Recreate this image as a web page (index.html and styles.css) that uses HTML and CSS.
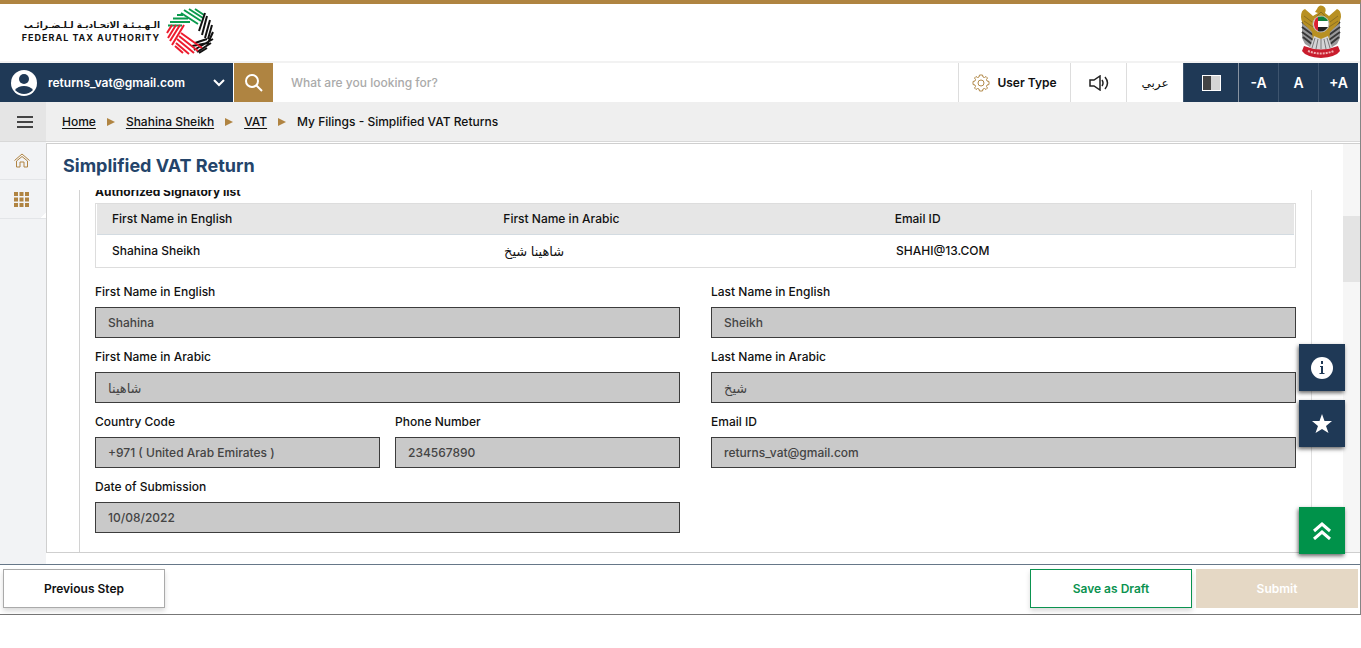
FILE: index.html
```
<!DOCTYPE html>
<html lang="en">
<head>
	<meta charset="UTF-8">
	<title>Simplified VAT Return</title>
	<link rel="stylesheet" href="styles.css">
</head>
<body>
<div class="app">
	<header class="header">
		<a class="logo" href="#">
			<span class="logo-text">
				<span class="logo-ar" lang="ar" dir="rtl">الـهـيـئـة الاتحـاديـة لـلـضـرائـب</span>
				<span class="logo-en">FEDERAL TAX AUTHORITY</span>
			</span>
			<svg class="logo-mark" viewBox="0 0 48 48" fill="none" stroke-width="2">
				<g stroke="#0B9A4D">
					<path d="M7 11.500H22M4 15H24M2 18.500H16M11 8H17"/>
					<path d="M15 6L32 17M18 3L35 14M23 2L37 11M29 2L38 8"/>
				</g>
				<g stroke="#111">
					<path d="M39 6L33 24M41 9L36 28M44 13L39 31M46 18L42 32"/>
					<path d="M47 25L42 36L26 39M47 32L28 43M45 36L31 45M41 41L33 46M41 32L29 36"/>
				</g>
				<g stroke="#ED1C2E">
					<path d="M15 26L36 41M13 29L32 44M11 32L28 46M10 36L23 47M9 39L17 46"/>
					<path d="M18 18L6 38M14 18L4 34M10 18L2 31M6 18L1 26"/>
				</g>
			</svg>
		</a>
		<svg class="emblem" viewBox="0 0 42 54">
			<path d="M2 13L13 20V45L5 40L2 34ZM40 13L29 20V45L37 40L40 34Z" fill="#99999B"/>
			<path d="M2 18L13 26M2 23L13 31M2 28L13 36M3 33L13 41M40 18L29 26M40 23L29 31M40 28L29 36M39 33L29 41" stroke="#383838" stroke-width="2"/>
			<path d="M17 5Q19 0 23 2Q27 4 25 9L29 12L37 5Q41 6 41 13Q40 19 35 23L30 28L29 37H13L12 28L7 23Q1 19 1 13Q1 6 5 5L13 12L18 9L15 8Z" fill="#B89022"/>
			<path d="M4 12L12 18M4 17L13 23M38 12L30 18M38 17L29 23M17 12L21 8L25 12" stroke="#8B6F22" fill="none"/>
			<path d="M14 32L9 46H33L28 32L21 35Z" fill="#D4D4D6"/>
			<path d="M15 34L12 44M18 35L16 45M21 35V45M24 35L26 45M27 34L30 44" stroke="#78787A"/>
			<circle cx="21" cy="20" r="8" fill="#fff" stroke="#B8B8B0"/>
			<path d="M18 13Q25 11 28 17H18Z" fill="#14813E"/>
			<path d="M18 23H28Q24 29 18 27Z" fill="#222"/>
			<path d="M18 13V27Q14 25 14 20T18 13" fill="#DC2032"/>
			<path d="M4 42Q21 49 38 42L40 47Q36 53 21 54Q6 53 2 47Z" fill="#C91C2D"/>
			<path d="M8 47Q21 52 34 47" stroke="#F0B0B2" stroke-width="2" stroke-dasharray="2 1" fill="none"/>
		</svg>
	</header>

	<nav class="toolbar">
		<button class="account">
			<svg width="28" height="28" viewBox="0 0 28 28"><circle cx="14" cy="14" r="13" fill="#fff"/><circle cx="14" cy="10" r="5" fill="#1F3956"/><path d="M5 21Q8 17 14 17T23 21Q19 25 14 25T5 21" fill="#1F3956"/></svg>
			<span>returns_vat@gmail.com</span>
			<svg class="chevron" width="12" height="8" viewBox="0 0 12 8"><path d="M1 1L6 6L11 1" stroke="#fff" stroke-width="2" fill="none"/></svg>
		</button>
		<button class="search-btn" aria-label="Search">
			<svg width="18" height="18" viewBox="0 0 18 18" fill="none" stroke="#fff" stroke-width="2"><circle cx="7" cy="7" r="6"/><path d="M11 11L17 17"/></svg>
		</button>
		<input class="search" type="text" aria-label="Search" placeholder="What are you looking for?">
		<button class="tool user-type">
			<svg width="18" height="18" viewBox="0 0 18 18" fill="none" stroke="#B28A4A" stroke-linejoin="round"><path d="M7.500 1H10.500L11 3L12.500 3.500L14 2.500L15.500 4L14.500 5.500L15 7L17 7.500V10.500L15 11L14.500 12.500L15.500 14L14 15.500L12.500 14.500L11 15L10.500 17H7.500L7 15L5.500 14.500L4 15.500L2.500 14L3.500 12.500L3 11L1 10.500V7.500L3 7L3.500 5.500L2.500 4L4 2.500L5.500 3.500L7 3Z"/><circle cx="9" cy="9" r="3"/></svg>
			User Type
		</button>
		<button class="tool sound" aria-label="Read aloud">
			<svg width="20" height="16" viewBox="0 0 20 16" fill="none" stroke="#222" stroke-width="1.500"><path d="M1 5H5L11 1V15L5 11H1Z"/><path d="M13 5Q15 8 13 11M16 2Q21 8 16 14"/></svg>
		</button>
		<button class="tool lang" lang="ar">عربي</button>
		<button class="dark contrast" aria-label="Contrast"><span class="contrast-icon"></span></button>
		<button class="dark">-A</button>
		<button class="dark">A</button>
		<button class="dark">+A</button>
	</nav>

	<div class="crumb-bar">
		<button class="menu-btn" aria-label="Menu"><span class="bars"></span></button>
		<div class="crumbs">
			<a href="#">Home</a><i></i>
			<a href="#">Shahina Sheikh</a><i></i>
			<a href="#">VAT</a><i></i>
			<span>My Filings - Simplified VAT Returns</span>
		</div>
	</div>

	<div class="workspace">
		<aside class="sidebar">
			<a href="#" aria-label="Home">
				<svg width="16" height="15" viewBox="0 0 16 15" fill="none" stroke="#B08442"><path d="M0.500 7.500L8 1L15.500 7.500M2.500 8V14H6V9H10V14H13.500V8L8 3.500Z"/></svg>
			</a>
			<a class="apps" href="#" aria-label="Services">
				<svg width="15" height="15" viewBox="0 0 15 15" fill="#B08442"><path d="M0 0H4V4H0ZM5.500 0H9.500V4H5.500ZM11 0H15V4H11ZM0 5.500H4V9.500H0ZM5.500 5.500H9.500V9.500H5.500ZM11 5.500H15V9.500H11ZM0 11H4V15H0ZM5.500 11H9.500V15H5.500ZM11 11H15V15H11Z"/></svg>
			</a>
		</aside>
		<main class="main">
			<h1>Simplified VAT Return</h1>
			<div class="scroll">
				<form class="form">
					<h2>Authorized Signatory list</h2>
					<table class="list">
						<thead>
							<tr><th>First Name in English</th><th>First Name in Arabic</th><th>Email ID</th></tr>
						</thead>
						<tbody>
							<tr><td>Shahina Sheikh</td><td lang="ar">شاهينا شيخ</td><td>SHAHI@13.COM</td></tr>
						</tbody>
					</table>
					<div class="fields">
						<div class="field">
							<label for="first-en">First Name in English</label>
							<input id="first-en" type="text" value="Shahina" readonly>
						</div>
						<div class="field">
							<label for="last-en">Last Name in English</label>
							<input id="last-en" type="text" value="Sheikh" readonly>
						</div>
						<div class="field">
							<label for="first-ar">First Name in Arabic</label>
							<input id="first-ar" type="text" lang="ar" value="شاهينا" readonly>
						</div>
						<div class="field">
							<label for="last-ar">Last Name in Arabic</label>
							<input id="last-ar" type="text" lang="ar" value="شيخ" readonly>
						</div>
						<div class="pair">
							<div class="field">
								<label for="country">Country Code</label>
								<input id="country" type="text" value="+971 ( United Arab Emirates )" readonly>
							</div>
							<div class="field">
								<label for="phone">Phone Number</label>
								<input id="phone" type="text" value="234567890" readonly>
							</div>
						</div>
						<div class="field">
							<label for="email">Email ID</label>
							<input id="email" type="text" value="returns_vat@gmail.com" readonly>
						</div>
						<div class="field">
							<label for="date">Date of Submission</label>
							<input id="date" type="text" value="10/08/2022" readonly>
						</div>
					</div>
				</form>
			</div>
			<div class="track"><div class="thumb"></div></div>
		</main>
		<div class="floating">
			<button aria-label="Information">
				<svg width="24" height="24" viewBox="0 0 24 24"><circle cx="12" cy="12" r="11" fill="#fff"/><path d="M11 5H13V8H11ZM10 10H13V17H14.500V18H9.500V17H11V11H10Z" fill="#1F3956"/></svg>
			</button>
			<button aria-label="Favourite">
				<svg width="20" height="20" viewBox="0 0 20 20"><path d="M10 0L12.500 7H20L14 12L16.500 19L10 15L3.500 19L6 12L0 7H7.500Z" fill="#fff"/></svg>
			</button>
			<button class="to-top" aria-label="Back to top">
				<svg width="18" height="18" viewBox="0 0 18 18" fill="none" stroke="#fff" stroke-width="3"><path d="M1 9L9 2L17 9M1 17L9 10L17 17"/></svg>
			</button>
		</div>
	</div>

	<footer class="footer">
		<button class="btn prev">Previous Step</button>
		<button class="btn draft">Save as Draft</button>
		<button class="btn submit">Submit</button>
	</footer>
</div>
</body>
</html>
```
FILE: styles.css
```
* {
	box-sizing: border-box;
}

body {
	margin: 0;
	background: #FFF;
	color: #111;
	font: 500 12px/16px Inter, "DejaVu Sans", sans-serif;
}

button,
input {
	font: inherit;
	color: inherit;
	border: none;
	border-radius: 0;
	padding: 0;
	outline: none;
}

button {
	background: none;
	cursor: pointer;
}

a {
	color: inherit;
}

svg {
	flex: none;
}

.app {
	display: flex;
	flex-direction: column;
	height: calc(100vh - 33px);
	min-height: 480px;
	border-top: 4px solid #AF8441;
	border-right: 1px solid #858585;
	border-bottom: 1px solid #777;
}

/* header */
.header {
	display: flex;
	justify-content: space-between;
	height: 59px;
	flex: none;
	padding: 0 18px;
	border-bottom: 2px solid #F2F2F2;
}

.logo {
	display: flex;
	align-items: center;
	gap: 6px;
	height: 54px;
	text-decoration: none;
}

.logo-text {
	display: flex;
	flex-direction: column;
	align-items: flex-end;
	width: 142px;
}

.logo-ar {
	font: bold 9px/14px "DejaVu Sans", sans-serif;
	white-space: nowrap;
}

.logo-en {
	font-size: 9px;
	line-height: 12px;
	font-weight: 700;
	letter-spacing: 1px;
	white-space: nowrap;
}

.logo-mark {
	width: 48px;
	height: 48px;
}

.emblem {
	width: 42px;
	height: 54px;
}

/* toolbar */
.toolbar {
	display: flex;
	height: 39px;
	flex: none;
	padding-right: 2px;
	font-weight: 600;
}

.account {
	display: flex;
	align-items: center;
	gap: 10px;
	width: 233px;
	padding: 0 8px 0 10px;
	background: #1F3956;
	color: #FFF;
}

.account .chevron {
	margin-left: auto;
}

.search-btn {
	display: flex;
	align-items: center;
	justify-content: center;
	width: 39px;
	margin-left: 1px;
	background: #AF8441;
}

.search {
	flex: 1;
	min-width: 0;
	padding: 0 18px;
	font-weight: 500;
}

.search::placeholder {
	color: #AAA;
}

.tool {
	display: flex;
	align-items: center;
	justify-content: center;
	gap: 7px;
	width: 56px;
	border-left: 1px solid #DDD;
}

.user-type {
	width: 112px;
}

.lang {
	width: 57px;
	font-weight: 400;
}

.dark {
	width: 40px;
	background: #1F3956;
	color: #FFF;
	font-size: 14px;
	border-left: 1px solid #3D546E;
}

.contrast {
	width: 55px;
}

.contrast + .dark {
	border-left-color: #8793A2;
}

.contrast-icon {
	display: inline-block;
	width: 19px;
	height: 16px;
	border: 1px solid #FFF;
	background: linear-gradient(to right, #444 50%, #D5D5D5 50%);
	vertical-align: middle;
}

/* breadcrumb */
.crumb-bar {
	display: flex;
	flex: none;
	height: 40px;
	background: #EFEFEF;
	border-bottom: 1px solid #D8D8D8;
}

.menu-btn {
	width: 46px;
	padding-left: 4px;
	background: #E5E5E5;
}

.bars {
	display: inline-block;
	width: 16px;
	height: 12px;
	border-top: 2px solid #444;
	border-bottom: 2px solid #444;
	background: linear-gradient(#444, #444) center / 16px 2px no-repeat;
	vertical-align: middle;
}

.crumbs {
	display: flex;
	align-items: center;
	gap: 11px;
	padding-left: 16px;
}

.crumbs a {
	text-underline-offset: 2px;
}

.crumbs i {
	border-left: 8px solid #B08442;
	border-top: 4px solid transparent;
	border-bottom: 4px solid transparent;
}

/* workspace */
.workspace {
	position: relative;
	display: flex;
	flex: 1;
	min-height: 0;
}

.sidebar {
	width: 46px;
	background: #F2F3F5;
}

.sidebar a {
	display: flex;
	align-items: center;
	height: 38px;
	padding-left: 14px;
	border-bottom: 1px solid #E3E5E8;
}

.sidebar .apps {
	height: 39px;
	background: linear-gradient(135deg, transparent 50%, #FFF 50%) right bottom / 5px 5px no-repeat;
}

.main {
	position: relative;
	display: flex;
	flex-direction: column;
	flex: 1;
	min-width: 0;
	margin: 1px 0 11px;
	border: 1px solid #CFCFCF;
	border-right: none;
}

.main h1 {
	margin: 0;
	padding: 10px 16px 12px;
	color: #24446A;
	font-size: 18px;
	line-height: 24px;
	font-weight: 700;
}

.scroll {
	flex: 1;
	min-height: 0;
	margin: 0 48px 0 32px;
	padding: 0 15px;
	border-left: 1px solid #D2D2D2;
	border-right: 1px solid #E0E0E0;
	overflow: hidden;
}

/* content is scrolled a little past the heading */
.form {
	margin-top: -6px;
}

.form h2 {
	margin: 0;
	padding-bottom: 3px;
	font-size: 12px;
	line-height: 16px;
	font-weight: 700;
}

.list {
	display: block;
	border: 1px solid #DDD;
}

.list thead,
.list tbody {
	display: block;
}

.list tr {
	display: grid;
	grid-template-columns: 1fr 1fr 1fr;
	padding-right: 23px;
}

.list thead {
	margin: 0 1px;
	background: #E6E6E6;
	border-bottom: 1px solid #D3DBE1;
}

.list th,
.list td {
	padding: 7px 15px;
	text-align: left;
	font-weight: 500;
}

.list td {
	padding: 8px 16px;
}

.list td:lang(ar),
.field input:lang(ar) {
	font-size: 13px;
}

.fields {
	display: grid;
	grid-template-columns: 1fr 1fr;
	gap: 11px 31px;
	padding-top: 16px;
}

.pair {
	display: grid;
	grid-template-columns: 1fr 1fr;
	gap: 15px;
}

.field {
	min-width: 0;
}

.field label {
	display: block;
	margin-bottom: 7px;
}

.field input {
	display: block;
	width: 100%;
	height: 31px;
	padding: 0 12px;
	background: #C9C9C9;
	border: 1px solid #3C3C3C;
	color: #444;
}

.track {
	position: absolute;
	top: 0;
	right: 0;
	bottom: 0;
	width: 17px;
	background: #F6F6F6;
}

.thumb {
	height: 66px;
	margin-top: 72px;
	background: #E4E4E4;
}

.floating {
	position: absolute;
	right: 15px;
	bottom: 10px;
	display: flex;
	flex-direction: column;
	gap: 9px;
}

.floating button {
	display: flex;
	align-items: center;
	justify-content: center;
	width: 46px;
	height: 47px;
	background: #1F3956;
	box-shadow: -1px 2px 4px rgba(0, 0, 0, 0.6);
}

.floating .to-top {
	margin-top: 51px;
	background: #00924A;
}

/* footer */
.footer {
	display: flex;
	flex: none;
	gap: 4px;
	height: 50px;
	padding: 4px 2px 6px 3px;
	border-top: 1px solid #667788;
}

.btn {
	width: 162px;
	background: #FFF;
	font-weight: 600;
	box-shadow: 0 3px 5px rgba(0, 0, 0, 0.15);
}

.prev {
	margin-right: auto;
	border: 1px solid #AAA;
}

.draft {
	border: 1px solid #0B9350;
	color: #0B9350;
}

.submit {
	background: #E5D8C5;
	color: #FFF;
	box-shadow: none;
}
```
